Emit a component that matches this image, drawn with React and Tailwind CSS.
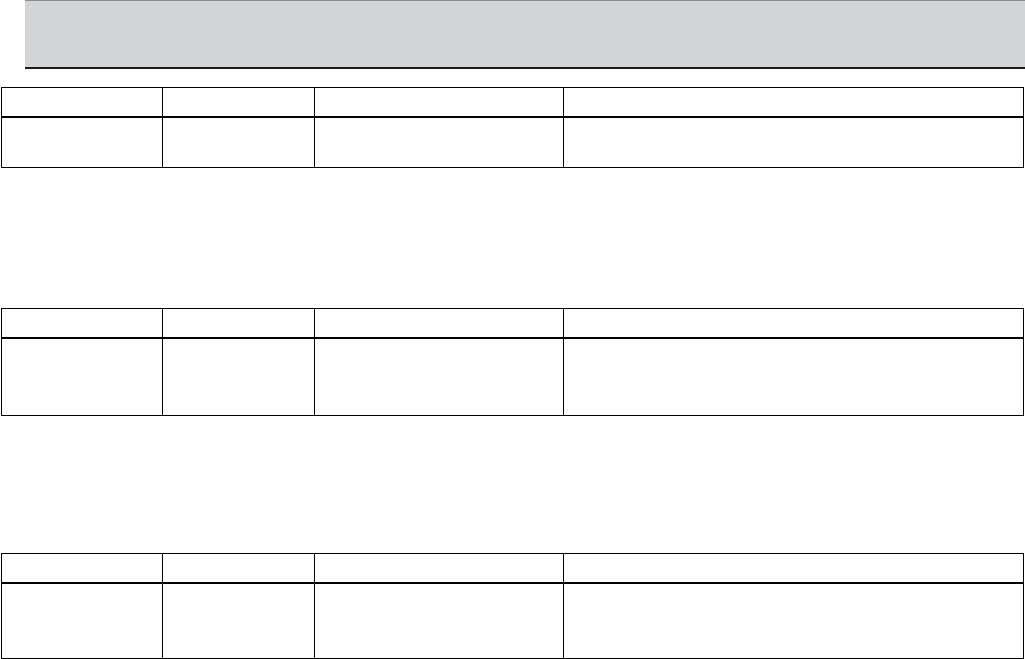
const cols = 'grid grid-cols-[161px_152px_249px_1fr]';

function Table({ bodyH, className = '' }) {
  const cell = 'border-r border-black';
  return (
    <div className={`ml-px w-[1023px] border border-black ${className}`}>
      <div className={`${cols} h-[30px] border-b-2 border-black`}>
        <div className={cell} />
        <div className={cell} />
        <div className={cell} />
        <div />
      </div>
      <div className={`${cols} ${bodyH}`}>
        <div className={cell} />
        <div className={cell} />
        <div className={cell} />
        <div />
      </div>
    </div>
  );
}

export default function App() {
  return (
    <div className="min-h-screen bg-white font-['Liberation_Sans',Arial,sans-serif]">
      <div className="ml-[25px] h-[69px] bg-[#d3d4d6] border-t border-t-[#8a8b8d] border-b-2 border-b-[#1a1a1a]" />
      <Table bodyH="h-[49px]" className="mt-[18px]" />
      <Table bodyH="h-[76px]" className="mt-[140px]" />
      <Table bodyH="h-[74px]" className="mt-[137px]" />
    </div>
  );
}
